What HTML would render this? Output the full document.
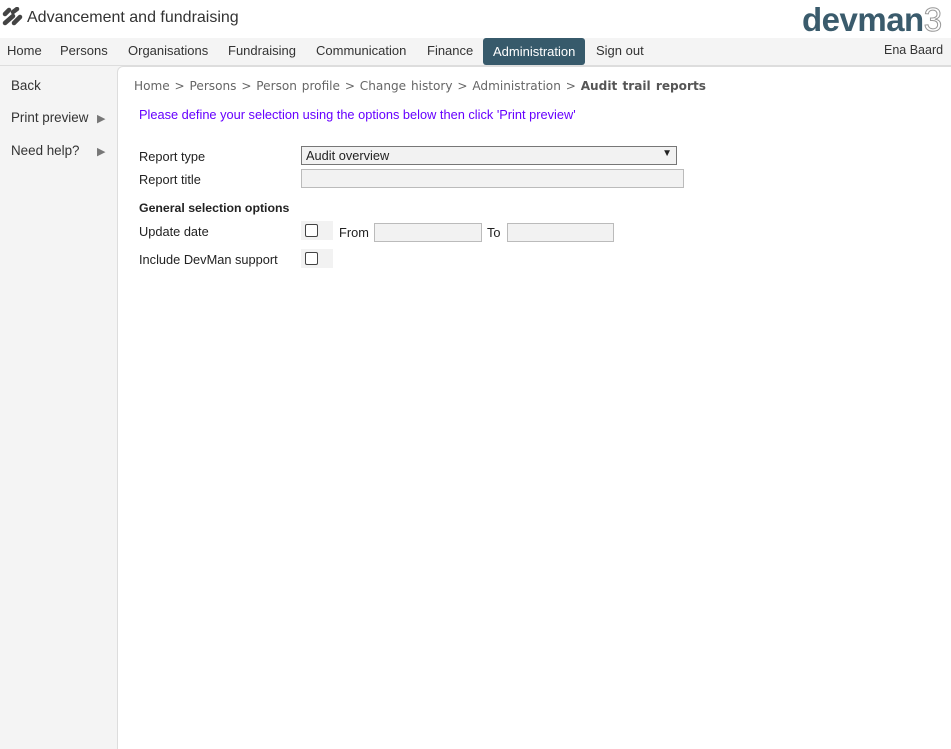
<!DOCTYPE html>
<html><head><style>
html,body{margin:0;width:951px;height:749px;overflow:hidden}
body{background:#f4f4f4;font-family:"Liberation Sans",Arial,sans-serif;position:relative;color:#222}
.top{position:absolute;left:0;top:0;width:951px;height:38px;background:#fff}
.title{position:absolute;left:27px;top:9px;font-size:16px;color:#333}
.logo{position:absolute;left:802px;top:1px;font-size:33px;font-weight:bold;color:#3a5b6c;letter-spacing:-0.5px;font-family:"Liberation Sans",sans-serif}
.logo span{color:#fff;-webkit-text-stroke:1px #999;font-weight:normal}
.nav{position:absolute;top:38px;left:0;width:951px;height:27px;background:#f4f4f4;border-bottom:1px solid #ddd}
.nav a{position:absolute;top:5px;font-size:13px;color:#333}
.nav .act{top:0;height:27px;line-height:27px;background:#375a6b;color:#fff;border-radius:3px;padding:0 10px}
.side a{position:absolute;left:11px;font-size:13.4px;color:#333}
.side b{position:absolute;left:97px;font-size:11px;color:#777;font-weight:normal}
.main{position:absolute;left:117px;top:66px;width:840px;height:683px;background:#fff;border:1px solid #ddd;border-bottom:none;border-radius:6px 0 0 0}
.bc{position:absolute;left:134px;top:79px;font-family:"DejaVu Sans",sans-serif;font-size:12.1px;color:#666;word-spacing:1px}
.bc b{color:#555}
.m{position:absolute;font-size:12.8px}
.box{position:absolute;background:#f2f2f2;border:1px solid #aaa;box-sizing:border-box}
.cb{position:absolute;width:13px;height:13px;border:1px solid #444;border-radius:2px;background:#fff;box-sizing:border-box}
.cbw{position:absolute;background:#f2f2f2}
</style></head><body>
<div class="top">
<svg style="position:absolute;left:1px;top:7px" width="22" height="20" viewBox="0 0 22 20"><g stroke="#444" stroke-width="4.5" stroke-linecap="round"><line x1="4" y1="7" x2="8" y2="3"/><line x1="12" y1="5" x2="16" y2="2"/><line x1="4" y1="16" x2="12" y2="9"/><line x1="13" y1="16" x2="19" y2="10"/></g></svg>
<div class="title">Advancement and fundraising</div>
<div class="logo">devman<span>3</span></div>
</div>
<div class="nav">
<a style="left:7px">Home</a><a style="left:60px">Persons</a><a style="left:128px">Organisations</a><a style="left:228px">Fundraising</a><a style="left:316px">Communication</a><a style="left:427px">Finance</a>
<a class="act" style="left:483px">Administration</a><a style="left:596px">Sign out</a><a style="left:884px;font-size:12.5px">Ena Baard</a>
</div>
<div class="side">
<a style="top:78px">Back</a><a style="top:110px">Print preview</a><b style="top:112px">▶</b><a style="top:143px">Need help?</a><b style="top:145px">▶</b>
</div>
<div class="main"></div>
<div class="bc">Home &gt; Persons &gt; Person profile &gt; Change history &gt; Administration &gt; <b>Audit trail reports</b></div>
<div class="m" style="left:139px;top:107px;color:#6600ff">Please define your selection using the options below then click 'Print preview'</div>
<div class="m" style="left:139px;top:149px">Report type</div>
<div class="box" style="left:301px;top:146px;width:376px;height:19px;border-color:#777;font-size:12.8px;padding:1px 4px">Audit overview<span style="position:absolute;right:4px;top:1px;font-size:10px">▼</span></div>
<div class="m" style="left:139px;top:172px">Report title</div>
<div class="box" style="left:301px;top:169px;width:383px;height:19px;border-color:#bbb"></div>
<div class="m" style="left:139px;top:201px;font-weight:bold;font-size:12.3px">General selection options</div>
<div class="m" style="left:139px;top:224px">Update date</div>
<div class="cbw" style="left:301px;top:221px;width:32px;height:19px"></div><div class="cb" style="left:305px;top:224px"></div>
<div class="m" style="left:339px;top:225px">From</div>
<div class="box" style="left:374px;top:223px;width:108px;height:19px;border-color:#bbb"></div>
<div class="m" style="left:487px;top:225px">To</div>
<div class="box" style="left:507px;top:223px;width:107px;height:19px;border-color:#bbb"></div>
<div class="m" style="left:139px;top:252px">Include DevMan support</div>
<div class="cbw" style="left:301px;top:249px;width:32px;height:19px"></div><div class="cb" style="left:305px;top:252px"></div>
</body></html>
